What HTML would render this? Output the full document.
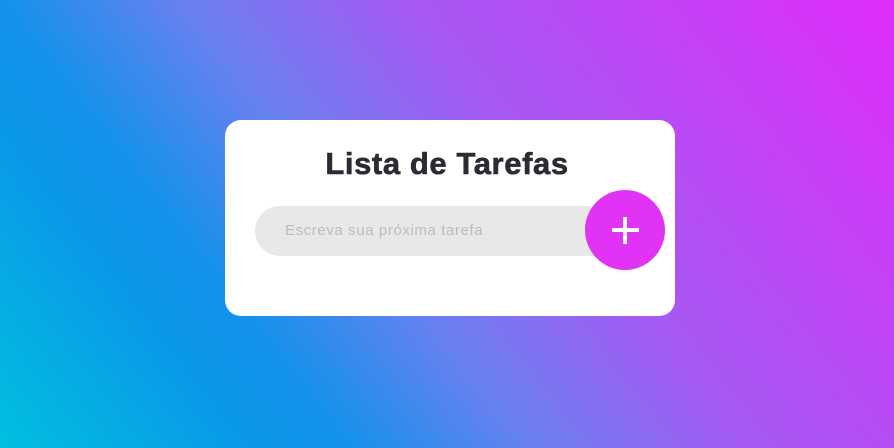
<!DOCTYPE html>
<html><head><meta charset="utf-8"><style>
html,body{margin:0;width:894px;height:448px;overflow:hidden}
body{background:linear-gradient(52deg,#00c0e0 0%,#0a98e8 20%,#1492ea 28%,#6a80f0 43%,#a45af2 60%,#e02cfb 100%);font-family:"Liberation Sans",sans-serif;position:relative}
.card{position:absolute;left:225px;top:120px;width:450px;height:196px;background:#fff;border-radius:16px}
h1{position:absolute;left:0;right:0;top:146px;margin:0;text-align:center;font-size:31px;font-weight:bold;color:#2d2a33;letter-spacing:0.6px;-webkit-text-stroke:0.6px #2d2a33}
.inp{position:absolute;left:255px;top:206px;width:360px;height:50px;border-radius:25px;background:#e8e8e8}
.ph{position:absolute;left:285px;top:222px;font-size:15px;color:#c2baba;letter-spacing:0.6px}
.btn{position:absolute;left:585px;top:190px;width:80px;height:80px;border-radius:50%;background:#e033f5}
.btn:before{content:"";position:absolute;left:27px;top:38px;width:27px;height:4px;background:#fff}
.btn:after{content:"";position:absolute;left:38px;top:27px;width:4px;height:27px;background:#fff}
</style></head><body>
<div class="card"></div>
<h1>Lista de Tarefas</h1>
<div class="inp"></div>
<div class="ph">Escreva sua próxima tarefa</div>
<div class="btn"></div>
</body></html>
